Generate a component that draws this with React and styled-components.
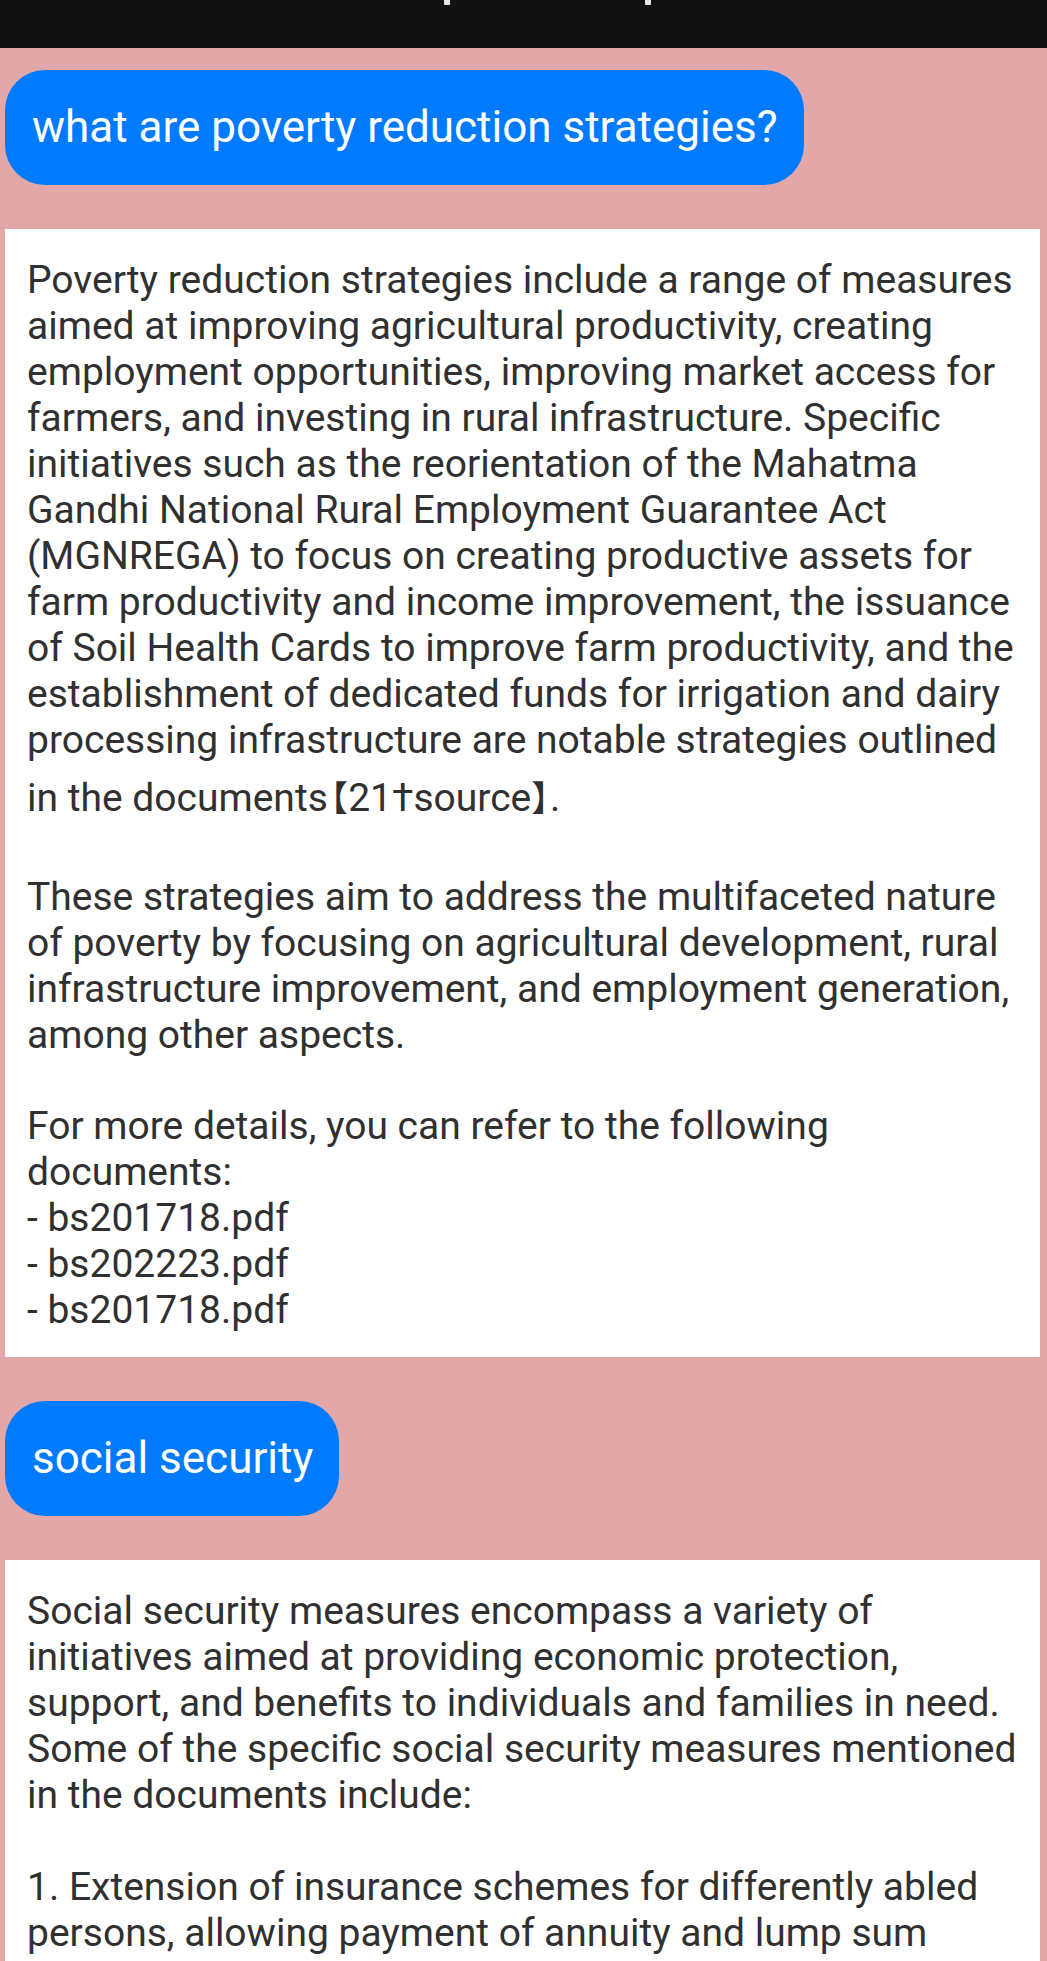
import React from "react";
import styled, { createGlobalStyle } from "styled-components";

const Global = createGlobalStyle`
  html, body { margin: 0; padding: 0; background: #e2a7a8; }
  #root { width: 1047px; }
`;

const Screen = styled.div`
  width: 1047px;
  height: 1961px;
  overflow: hidden;
  background: #e2a7a8;
  font-family: Roboto, "Noto Sans", sans-serif;
  display: flex;
  flex-direction: column;
`;

const TopBar = styled.div`
  height: 48px;
  flex: none;
  background: #121212;
  display: flex;
  align-items: flex-start;
`;

const Tick = styled.span`
  width: 6px;
  height: 5px;
  margin-left: ${(p) => p.$offset}px;
  background: #e6e6e6;
  border-radius: 0 0 1px 1px;
`;

const Thread = styled.div`
  display: flex;
  flex-direction: column;
  gap: 44px;
  padding: 22px 0;
`;

const Bubble = styled.div`
  align-self: flex-start;
  margin-left: 5px;
  background: #007bff;
  color: #ffffff;
  font-size: 44px;
  line-height: 51px;
  padding: 32px 26px 32px 27px;
  border-radius: 40px;
  white-space: nowrap;
`;

const Card = styled.div`
  margin: 0 7px 0 5px;
  background: #ffffff;
  color: #303030;
  font-size: 39px;
  line-height: normal;
  padding: 28px 22px 24px 22px;
`;

const Para = styled.p`
  margin: 0 0 ${(p) => (p.$last ? 0 : "1.172em")} 0;
`;

const Line = styled.span`
  display: block;
`;

const Cite = styled.span`
  display: inline-block;
  white-space: nowrap;
  padding: 7px 0 7px 0;
`;

const Bracket = styled.span`
  font-family: "Noto Sans CJK SC", sans-serif;
  font-size: 0.9em;
  margin-left: ${(p) => (p.$open ? "-0.42em" : "0")};
  margin-right: ${(p) => (p.$open ? "0" : "-0.6em")};
`;

const Dot = styled.span`
  margin-left: 0.12em;
`;

export default function App() {
  return (
    <>
      <Global />
      <Screen>
        <TopBar>
          <Tick $offset={444} />
          <Tick $offset={195} />
        </TopBar>
        <Thread>
          <Bubble>what are poverty reduction strategies?</Bubble>
          <Card>
            <Para>
              Poverty reduction strategies include a range of measures aimed at
              improving agricultural productivity, creating employment
              opportunities, improving market access for farmers, and investing
              in rural infrastructure. Specific initiatives such as the
              reorientation of the Mahatma Gandhi National Rural Employment
              Guarantee Act (MGNREGA) to focus on creating productive assets for
              farm productivity and income improvement, the issuance of Soil
              Health Cards to improve farm productivity, and the establishment of
              dedicated funds for irrigation and dairy processing infrastructure
              are notable strategies outlined in the{" "}
              <Cite>
                documents<Bracket $open>【</Bracket>21†source<Bracket>】</Bracket><Dot>.</Dot>
              </Cite>
            </Para>
            <Para>
              These strategies aim to address the multifaceted nature of poverty
              by focusing on agricultural development, rural infrastructure
              improvement, and employment generation, among other aspects.
            </Para>
            <Para $last>
              <Line>For more details, you can refer to the following documents:</Line>
              <Line>- bs201718.pdf</Line>
              <Line>- bs202223.pdf</Line>
              <Line>- bs201718.pdf</Line>
            </Para>
          </Card>
          <Bubble>social security</Bubble>
          <Card>
            <Para>
              Social security measures encompass a variety of initiatives aimed
              at providing economic protection, support, and benefits to
              individuals and families in need. Some of the specific social
              security measures mentioned in the documents include:
            </Para>
            <Para>
              1. Extension of insurance schemes for differently abled persons,
              allowing payment of annuity and lump sum amounts to the nominee in
              case of death of the insured parent.
            </Para>
          </Card>
        </Thread>
      </Screen>
    </>
  );
}
